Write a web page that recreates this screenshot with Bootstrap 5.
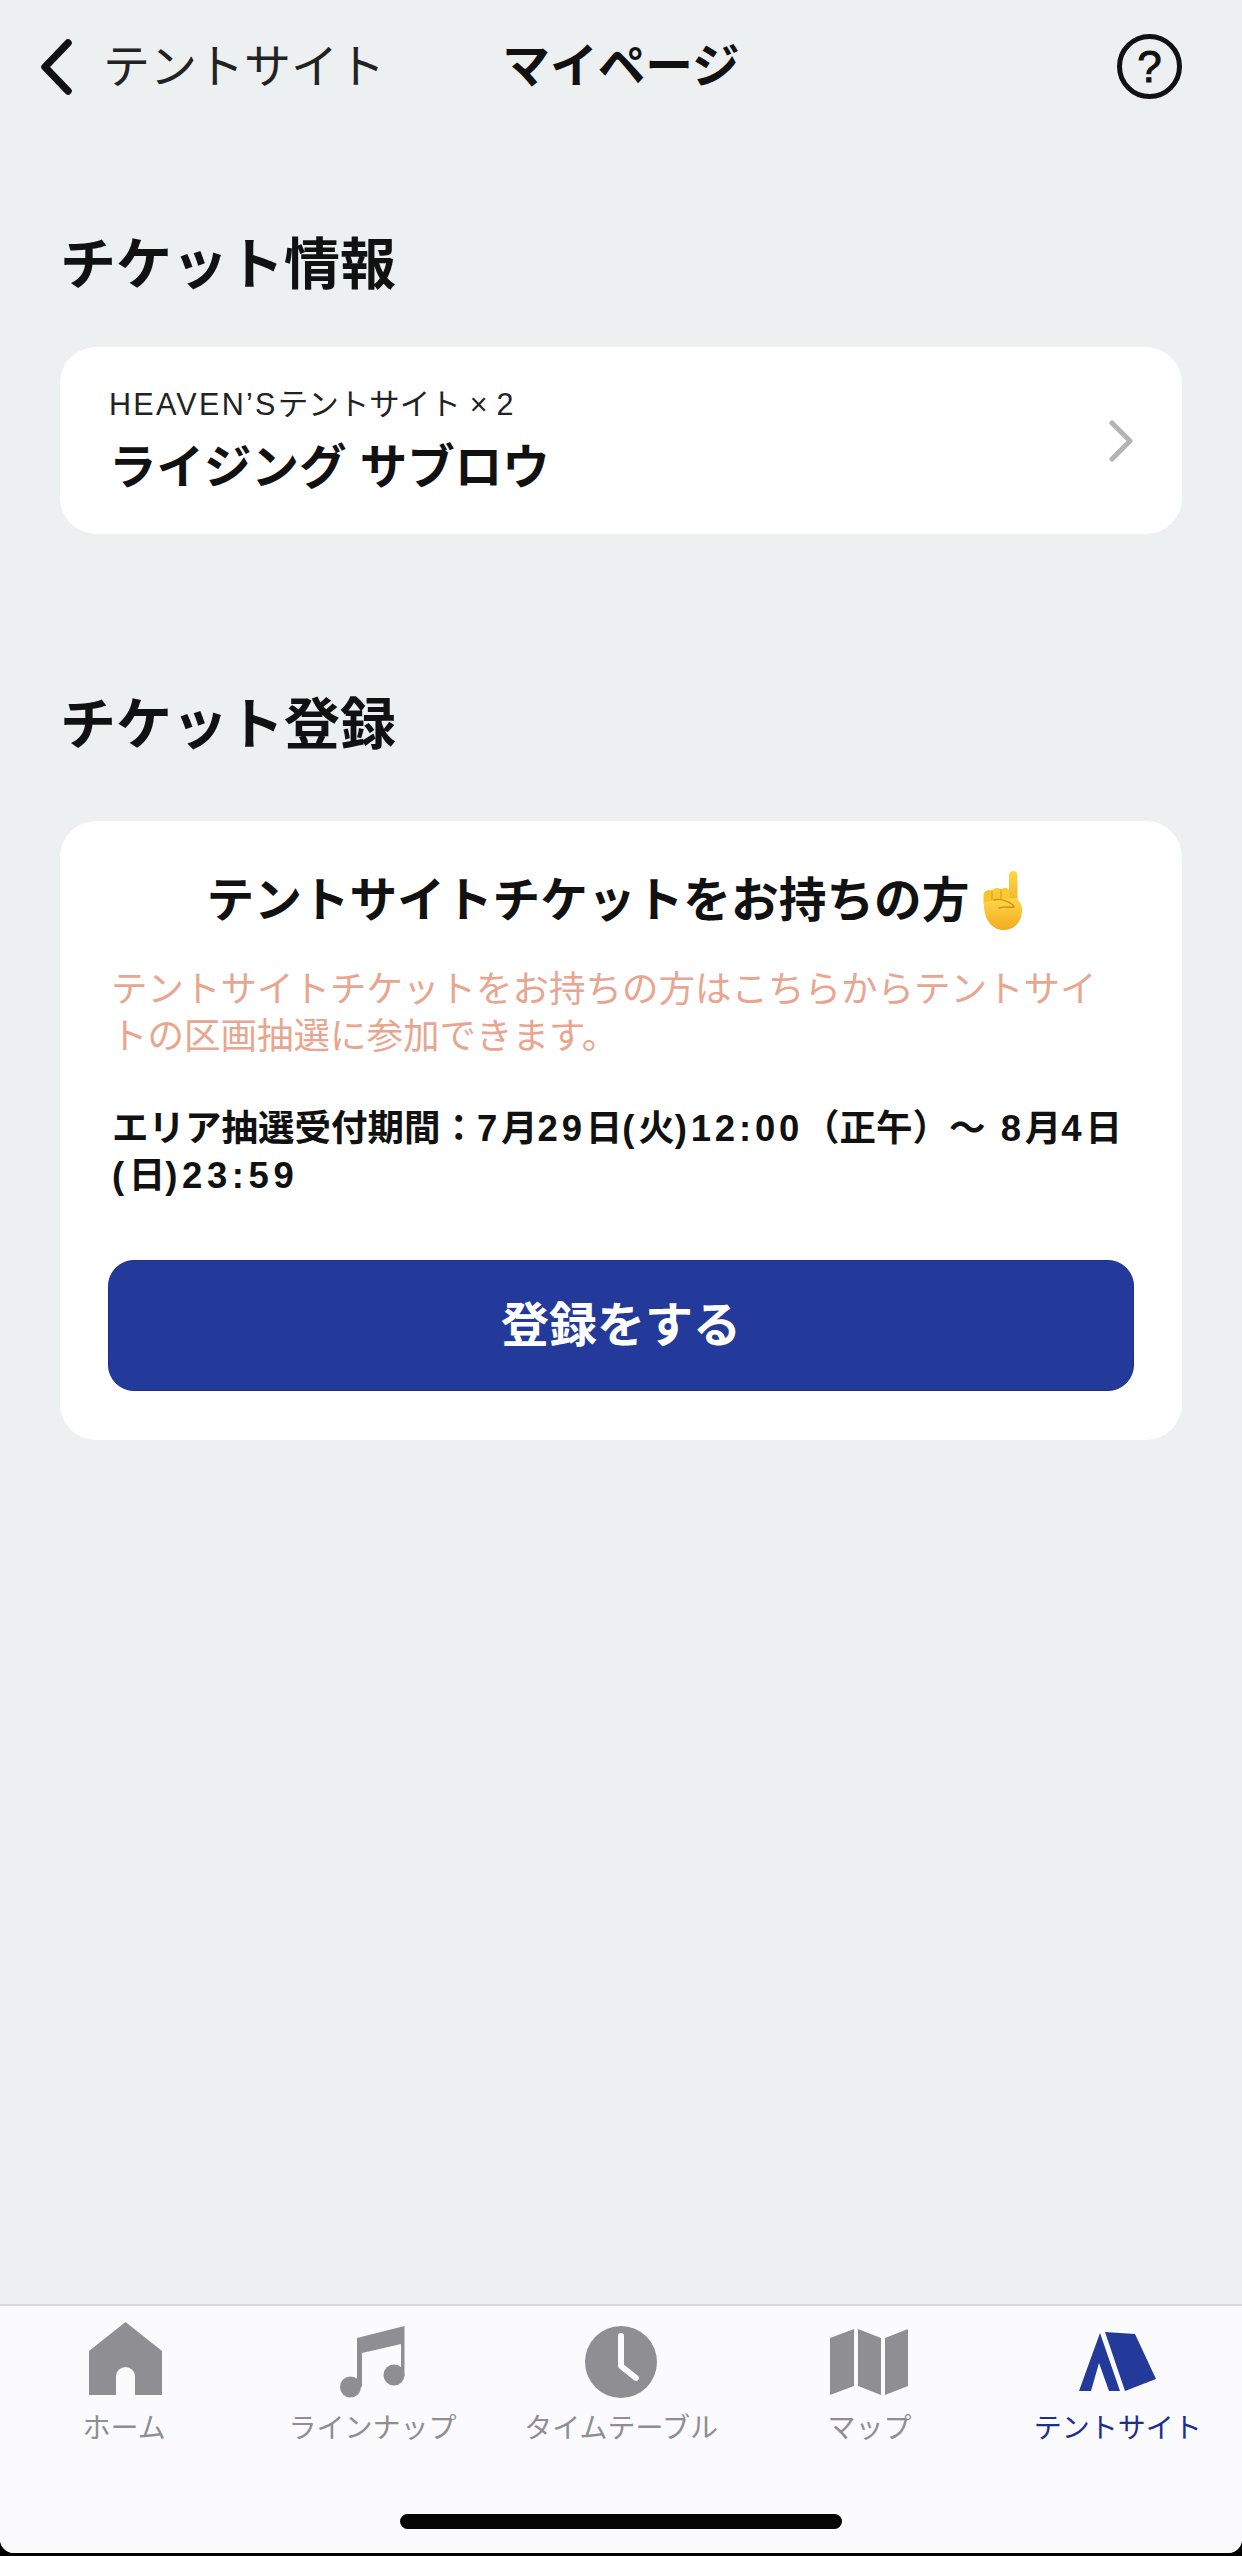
<!DOCTYPE html>
<html lang="ja">
<head>
<meta charset="utf-8">
<title>マイページ</title>
<link href="https://cdn.jsdelivr.net/npm/bootstrap@5.3.0/dist/css/bootstrap.min.css" rel="stylesheet">
<style>
html,body{height:100%;margin:0}
body{background:#000;font-family:"Liberation Sans","Noto Sans CJK JP",sans-serif;color:#111}
.app-shell{height:2553px;background:#ecf0f1;border-radius:0 0 14px 14px;overflow:hidden}
.top-bar{height:133px;padding:0 60px}
.top-side{flex:1 1 0}
.back-chev{margin-left:-21px}
.back-label{font-size:47px;line-height:1;color:#222;margin-left:30px}
.top-title{font-size:47.7px;line-height:1;font-weight:700;color:#111}
.help-btn{width:65px;height:65px;border:5px solid #111;border-radius:50%;font-size:44px;font-weight:400;line-height:1;-webkit-text-stroke:1px #111}
.content-area{padding:0 60px}
.sec-heading{font-size:56px;line-height:80px;font-weight:700;margin:0}
.sec-one{padding-top:92px;margin-bottom:42px}
.sec-two{margin-top:151px;margin-bottom:56px}
.white-card{border:0;border-radius:36px;background:#fff}
.ticket-card{height:187px;padding:0 49px;color:#111}
.ticket-sub{font-size:30.5px;line-height:44px;color:#222;margin-top:-1px}
.latin-wide{letter-spacing:2.3px}
.gap-x{margin:0 9px}
.ticket-name{font-size:47.5px;line-height:60px;font-weight:700;margin-top:12px}
.reg-card{padding:45px 48px 49px}
.reg-title{font-size:47.7px;line-height:70px;font-weight:700;gap:10px;padding-right:10px}
.reg-note{font-size:36.5px;line-height:47px;color:#e8a690;margin:30px 0 0 3px;white-space:nowrap}
.reg-period{font-size:36.5px;line-height:47px;font-weight:700;margin:45px 0 0 4px;white-space:nowrap}
.digit-wide{letter-spacing:3.8px}
.digit-wider{letter-spacing:4.6px}
.dash-gap{margin-right:5px}
.reg-btn{display:block;width:100%;height:131px;margin-top:61px;background:#243a9a;border:1px solid #1c2f8e;border-radius:26px;color:#fff;font-size:48px;font-weight:700;line-height:1}
.tab-bar{background:#fbfafd;border-top:2px solid #d8dadb;height:249px}
.tab-item{flex:1 1 0;height:137px;color:#8e8e93;font-size:28px;line-height:1;white-space:nowrap}
.tab-item.tab-on{color:#1b2f8f}
.tab-icon{height:75px;margin-top:18px;margin-bottom:16px;flex-shrink:0}
.home-lift{margin-top:15px;margin-bottom:19px;margin-left:2px}
.home-bar{width:442px;height:15px;background:#050505;border-radius:8px;margin:71px auto 0}
</style>
</head>
<body>
<div class="app-shell d-flex flex-column">
  <header class="top-bar d-flex align-items-center">
    <div class="top-side d-flex align-items-center">
      <svg class="back-chev" width="34" height="58" viewBox="0 0 34 58"><polyline points="29,5 6,29 29,53" fill="none" stroke="#111" stroke-width="7.5" stroke-linecap="round" stroke-linejoin="round"/></svg>
      <span class="back-label">テントサイト</span>
    </div>
    <div class="top-title">マイページ</div>
    <div class="top-side d-flex justify-content-end">
      <div class="help-btn d-flex align-items-center justify-content-center">?</div>
    </div>
  </header>

  <main class="content-area flex-grow-1">
    <h2 class="sec-heading sec-one">チケット情報</h2>
    <div class="card white-card ticket-card d-flex flex-row align-items-center justify-content-between">
      <div>
        <div class="ticket-sub"><span class="latin-wide">HEAVEN’S</span>テントサイト<span class="gap-x">×</span>2</div>
        <div class="ticket-name">ライジング サブロウ</div>
      </div>
      <svg width="24" height="42" viewBox="0 0 24 42"><polyline points="3,3 21,21 3,39" fill="none" stroke="#b4b4b4" stroke-width="5" stroke-linecap="round" stroke-linejoin="round"/></svg>
    </div>

    <h2 class="sec-heading sec-two">チケット登録</h2>
    <div class="card white-card reg-card">
      <div class="reg-title d-flex align-items-center justify-content-center">
        <span>テントサイトチケットをお持ちの方</span>
        <svg width="46" height="62" viewBox="0 0 46 62">
          <defs><linearGradient id="handGrad" x1="0" y1="0" x2="0" y2="1"><stop offset="0" stop-color="#fcd84a"/><stop offset="1" stop-color="#f5aa1e"/></linearGradient></defs>
          <rect x="29" y="1" width="8.5" height="38" rx="4.2" fill="url(#handGrad)"/>
          <rect x="3.5" y="20" width="11" height="18" rx="5.5" fill="#f9c22f"/>
          <rect x="12" y="18" width="10" height="18" rx="5" fill="#fbc933"/>
          <rect x="20" y="18" width="10" height="18" rx="5" fill="#fbc933"/>
          <path d="M4 32 C3 46 10 60 24 60 C36 60 42 50 42 40 C42 34 39 30 36 28 L20 30 Z" fill="url(#handGrad)"/>
          <path d="M14 30 C20 28 32 32 34 37 C28 38 24 36 19 38" fill="none" stroke="#d98a12" stroke-width="1.4" stroke-linecap="round"/>
          <path d="M12 20 V30 M21 19 V29" fill="none" stroke="#e09a18" stroke-width="1"/>
        </svg>
      </div>
      <p class="reg-note">テントサイトチケットをお持ちの方はこちらからテントサイ<br>トの区画抽選に参加できます。</p>
      <p class="reg-period">エリア抽選受付期間：<span class="digit-wide">7</span>月<span class="digit-wide">29</span>日<span class="digit-wide">(</span>火<span class="digit-wide">)12:00</span>（正午）<span class="dash-gap">～</span> <span class="digit-wide">8</span>月<span class="digit-wide">4</span>日<br><span class="digit-wider">(</span>日<span class="digit-wider">)23:59</span></p>
      <button type="button" class="btn reg-btn">登録をする</button>
    </div>
  </main>

  <nav class="tab-bar">
    <div class="d-flex">
      <div class="tab-item d-flex flex-column align-items-center">
        <div class="tab-icon home-lift d-flex align-items-center"><svg width="73" height="73" viewBox="0 0 73 73"><path d="M36.5 0 L73 29 V73 H46 V54.5 a9.5 9.5 0 0 0 -19 0 V73 H0 V29 Z" fill="#8e8e93"/></svg></div>
        <span>ホーム</span>
      </div>
      <div class="tab-item d-flex flex-column align-items-center">
        <div class="tab-icon d-flex align-items-center"><svg width="66" height="72" viewBox="0 0 66 72"><path d="M17 12 L64.5 0 V50 H61 V18 L22 27 V61 H17 Z" fill="#8e8e93"/><circle cx="54" cy="49" r="10.5" fill="#8e8e93"/><circle cx="10.5" cy="61" r="10.5" fill="#8e8e93"/></svg></div>
        <span>ラインナップ</span>
      </div>
      <div class="tab-item d-flex flex-column align-items-center">
        <div class="tab-icon d-flex align-items-center"><svg width="72" height="72" viewBox="0 0 72 72"><circle cx="36" cy="36" r="36" fill="#8e8e93"/><path d="M36 10 V40 L51 52" fill="none" stroke="#fbfafd" stroke-width="6" stroke-linecap="round" stroke-linejoin="round"/></svg></div>
        <span>タイムテーブル</span>
      </div>
      <div class="tab-item d-flex flex-column align-items-center">
        <div class="tab-icon d-flex align-items-center"><svg width="78" height="66" viewBox="0 0 78 66"><g fill="#8e8e93"><polygon points="0,9 24,0 24,57 0,66"/><polygon points="28,0 51,9 51,66 28,57"/><polygon points="55,9 78,0 78,57 55,66"/></g></svg></div>
        <span>マップ</span>
      </div>
      <div class="tab-item tab-on d-flex flex-column align-items-center">
        <div class="tab-icon d-flex align-items-center"><svg width="77" height="60" viewBox="0 0 77 60"><g fill="#243a9a"><polygon points="21,1 0,59 12,59 20,31 30,59 41,59"/><polygon points="26,0 56,2 77,47 46,59"/></g></svg></div>
        <span>テントサイト</span>
      </div>
    </div>
    <div class="home-bar"></div>
  </nav>
</div>
<script src="https://cdn.jsdelivr.net/npm/bootstrap@5.3.0/dist/js/bootstrap.bundle.min.js"></script>
</body>
</html>
